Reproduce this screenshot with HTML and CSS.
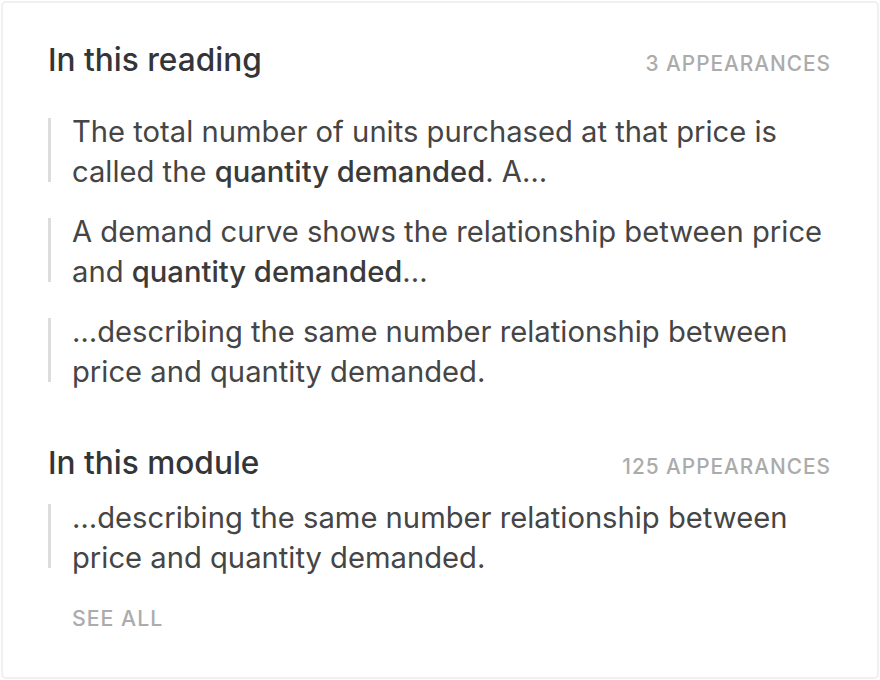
FILE: index.html
```html
<!DOCTYPE html>
<html lang="en">
<head>
<meta charset="utf-8">
<link rel="stylesheet" href="styles.css">
</head>
<body>
<div class="card">
  <section class="section section-reading">
    <div class="section-head">
      <h2 class="section-title">In this reading</h2>
      <span class="count">3 APPEARANCES</span>
    </div>
    <div class="quotes">
      <div class="quote"><span class="bar"></span><p class="quote-text">The total number of units purchased at that price is called the <strong>quantity demanded</strong>. A…</p></div>
      <div class="quote"><span class="bar"></span><p class="quote-text">A demand curve shows the relationship between price and <strong>quantity demanded</strong>...</p></div>
      <div class="quote"><span class="bar"></span><p class="quote-text">…describing the same number relationship between price and quantity demanded.</p></div>
    </div>
  </section>
  <section class="section section-module">
    <div class="section-head">
      <h2 class="section-title">In this module</h2>
      <span class="count">125 APPEARANCES</span>
    </div>
    <div class="quotes">
      <div class="quote"><span class="bar"></span><p class="quote-text">…describing the same number relationship between price and quantity demanded.</p></div>
    </div>
    <a class="see-all" href="#">SEE ALL</a>
  </section>
</div>
</body>
</html>
```
FILE: styles.css
```css
* { box-sizing: border-box; }
html, body { margin: 0; padding: 0; background: #ffffff; }
body {
  padding: 1px;
  font-family: "Inter", "Roboto", sans-serif;
  color: #454545;
}
.card {
  width: 878px;
  height: 678px;
  border: 2px solid #f0f0f0;
  border-radius: 5px;
  background: #fff;
  padding: 39px 40px 0 45px;
}
.section-head {
  display: flex;
  justify-content: space-between;
  align-items: baseline;
  height: 36px;
  padding-right: 6px;
}
.section-title {
  margin: 0;
  font-size: 31.6px;
  line-height: 36px;
  font-weight: 500;
  color: #333539;
}
.count {
  font-size: 20.8px;
  letter-spacing: 1px;
  color: #ababab;
  font-weight: 500;
}
.section-reading .quotes { margin-top: 34px; }
.section-module { margin-top: 53px; }
.section-module .quotes { margin-top: 17px; }
.quotes { display: flex; flex-direction: column; gap: 20px; }
.quote { display: flex; }
.bar {
  flex: 0 0 3px;
  width: 3px;
  margin: 6px 21px 10px 0;
  background: #dcdcdc;
}
.quote-text {
  margin: 0;
  font-size: 29.2px;
  line-height: 40px;
  color: #454545;
}
.quote-text strong { font-weight: 500; color: #3a3a3a; }
.see-all {
  display: block;
  margin-top: 30px;
  margin-left: 24px;
  font-size: 21.3px;
  line-height: 20px;
  letter-spacing: 1px;
  font-weight: 500;
  color: #acacac;
  text-decoration: none;
}
```
